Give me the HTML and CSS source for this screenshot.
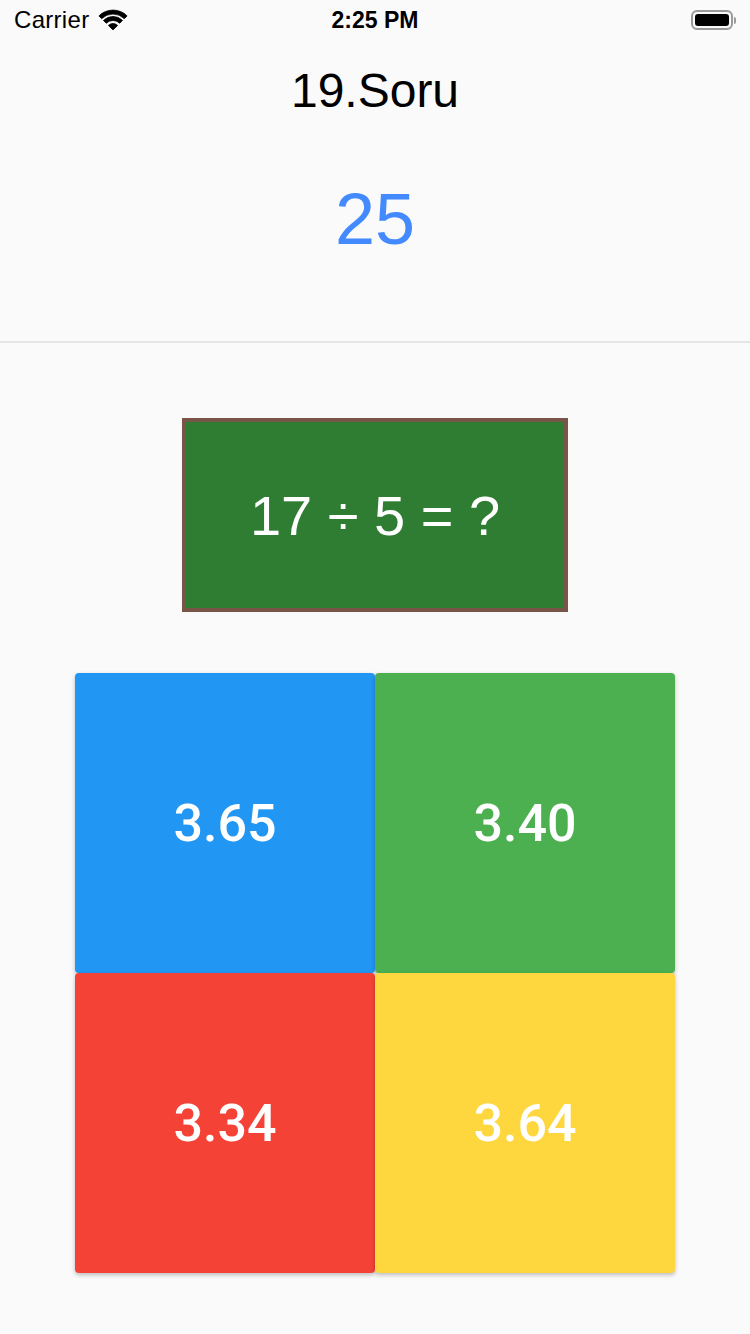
FILE: index.html
```html
<!DOCTYPE html>
<html>
<head>
<meta charset="utf-8">
<link rel="stylesheet" href="styles.css">
</head>
<body>
<div class="status">
  <div class="status-left">
    <span class="carrier">Carrier</span>
    <svg class="wifi" width="30" height="22" viewBox="0 0 30 22">
      <path d="M15 21 L10.4 16.4 A6.5 6.5 0 0 1 19.6 16.4 Z" fill="#000" stroke="#000" stroke-width="0.8" stroke-linejoin="round"/>
      <path d="M5.45 11.45 A13.5 13.5 0 0 1 24.55 11.45 L21.72 14.28 A9.5 9.5 0 0 0 8.28 14.28 Z" fill="#000" stroke="#000" stroke-width="0.8" stroke-linejoin="round"/>
      <path d="M0.9 6.9 A20 20 0 0 1 29.1 6.9 L26.3 9.7 A16 16 0 0 0 3.7 9.7 Z" fill="#000" stroke="#000" stroke-width="0.8" stroke-linejoin="round"/>
    </svg>
  </div>
  <div class="time">2:25 PM</div>
  <div class="status-right">
    <div class="battery"><div class="battery-fill"></div></div>
    <div class="battery-nub"></div>
  </div>
</div>

<header class="head">
  <h1 class="title">19.Soru</h1>
  <div class="score">25</div>
</header>
<div class="divider"></div>

<main class="main">
  <div class="board">17 ÷ 5 = ?</div>
  <div class="answers">
    <div class="answer blue">3.65</div>
    <div class="answer green">3.40</div>
    <div class="answer red">3.34</div>
    <div class="answer yellow">3.64</div>
  </div>
</main>
</body>
</html>
```
FILE: styles.css
```css
html, body {
  margin: 0;
  padding: 0;
  background: #fafafa;
  font-family: "Liberation Sans", Arial, sans-serif;
  width: 750px;
  height: 1334px;
  overflow: hidden;
}

.status {
  height: 40px;
  display: flex;
  align-items: center;
  justify-content: space-between;
  padding: 0 14px;
  position: relative;
}
.status-left {
  display: flex;
  align-items: center;
  gap: 9px;
}
.carrier {
  font-size: 24px;
  letter-spacing: 0.3px;
  color: #000;
}
.wifi {
  display: block;
  margin-top: -1px;
}
.time {
  position: absolute;
  left: 0;
  right: 0;
  text-align: center;
  font-size: 23px;
  font-weight: 700;
  color: #000;
  pointer-events: none;
}
.status-right {
  display: flex;
  align-items: center;
}
.battery {
  width: 42px;
  height: 20px;
  box-sizing: border-box;
  border: 2px solid #9a9a9a;
  border-radius: 6px;
  padding: 2px;
}
.battery-fill {
  width: 100%;
  height: 100%;
  background: #000;
  border-radius: 3px;
}
.battery-nub {
  width: 2px;
  height: 7px;
  background: #9a9a9a;
  border-radius: 0 2px 2px 0;
  margin-left: 1px;
}

.head {
  display: flex;
  flex-direction: column;
  align-items: center;
  padding-top: 23px;
}
.title {
  margin: 0;
  font-size: 48px;
  font-weight: 400;
  line-height: 56px;
  color: #000;
}
.score {
  margin-top: 60px;
  font-size: 72px;
  line-height: 80px;
  color: #448aff;
}
.divider {
  margin-top: 82px;
  height: 2px;
  background: #e6e6e6;
}

.main {
  display: flex;
  flex-direction: column;
  align-items: center;
  padding-top: 75px;
}
.board {
  width: 386px;
  height: 194px;
  box-sizing: border-box;
  border: 4px solid #795548;
  background: #2e7d32;
  color: #fff;
  font-size: 56px;
  display: flex;
  align-items: center;
  justify-content: center;
}
.answers {
  margin-top: 61px;
  display: grid;
  grid-template-columns: 300px 300px;
  grid-template-rows: 300px 300px;
}
.answer {
  display: flex;
  align-items: center;
  justify-content: center;
  color: #fff;
  font-family: Roboto, "Liberation Sans", sans-serif;
  font-size: 52px;
  font-weight: 500;
  border-radius: 4px;
  box-shadow: 0 2px 4px rgba(0,0,0,0.25);
}
.blue { background: #2196f3; }
.green { background: #4caf50; }
.red { background: #f44336; }
.yellow { background: #fed73f; }
```
